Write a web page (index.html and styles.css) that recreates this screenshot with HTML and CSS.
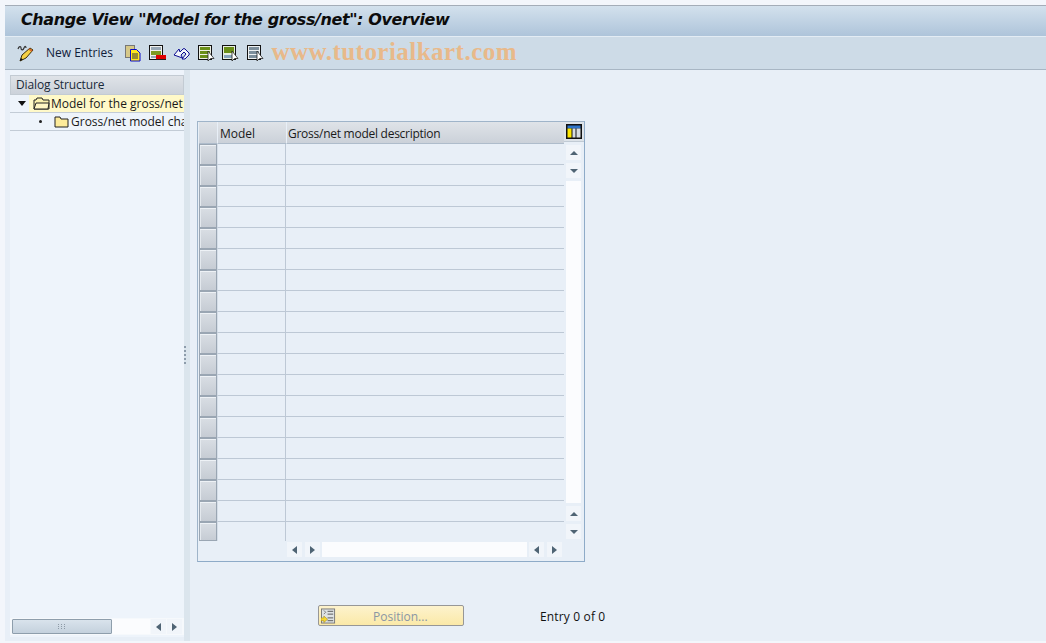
FILE: index.html
```html
<!DOCTYPE html>
<html lang="en">
<head>
<meta charset="utf-8">
<title>Change View</title>
<link rel="stylesheet" href="styles.css">
</head>
<body>
<div class="app">
  <header class="titlebar"><h1>Change View "Model for the gross/net": Overview</h1></header>
  <div class="toolbar">
    <svg class="ic pencil" viewBox="0 0 17 17"><path d="M1 4c1-3 3-3 3-1s2 3 3 0 2-1 2 0" fill="none" stroke="#333" stroke-width="1.200"/><path d="M3 16l2-6 8-7 3 2-7 8z" fill="#f6d145" stroke="#3a2c08"/><path d="M12 4l3 2" stroke="#d9682a" stroke-width="2"/><path d="M3 16l1-3 2 1.500z" fill="#111"/></svg>
    <span class="newent">New Entries</span>
    <svg class="ic copy" viewBox="0 0 17 17"><rect x=".5" y=".5" width="9" height="12" fill="#d6c888" stroke="#777"/><path d="M5.500 4.500h6l3.500 3.500v8H5.500z" fill="#ffe81a" stroke="#0a0ac8"/><path d="M7 9h6M7 11h6M7 13h6" stroke="#334"/></svg>
    <svg class="ic del" viewBox="0 0 17 17"><rect x=".5" y=".5" width="13" height="14" fill="#f2f2ee" stroke="#111"/><rect x="2" y="2" width="10" height="3" fill="#98a8b6"/><rect x="2" y="6" width="10" height="4" fill="#7f9a20"/><rect x="2" y="11" width="5" height="2" fill="#98a8b6"/><rect x="7" y="10" width="10" height="4" fill="#e00000"/><rect x="7" y="14" width="10" height="1" fill="#222"/></svg>
    <svg class="ic undo" viewBox="0 0 17 17"><path d="M1 10L6 4l1 3 3-3q1-1 2 0l4 4q.5 1 0 2l-4 4H9l4-5-2-2-3 3 1.500 3z" fill="#f3f6fb" stroke="#0a0a90" stroke-linejoin="round"/></svg>
    <svg class="ic sel" viewBox="0 0 17 17"><rect x=".5" y=".5" width="13" height="14" fill="#eef0e4" stroke="#111"/><rect x="2" y="2" width="10" height="3" fill="#6a8f18"/><rect x="2" y="6" width="10" height="3" fill="#6a8f18"/><rect x="2" y="10" width="10" height="3" fill="#6a8f18"/><path d="M10 6v10l2.500-2.500H16z" fill="#fff" stroke="#222" stroke-width=".8"/></svg>
    <svg class="ic sel2" viewBox="0 0 17 17"><rect x=".5" y=".5" width="13" height="14" fill="#e8efe0" stroke="#111"/><rect x="2" y="2" width="10" height="6" fill="#6a8f18"/><rect x="2" y="10" width="10" height="3" fill="#86a4bc"/><path d="M10 6v10l2.500-2.500H16z" fill="#fff" stroke="#222" stroke-width=".8"/></svg>
    <svg class="ic sel3" viewBox="0 0 17 17"><rect x=".5" y=".5" width="13" height="14" fill="#eef1f2" stroke="#111"/><rect x="2" y="2" width="10" height="3" fill="#7d8f9c"/><rect x="2" y="6" width="10" height="3" fill="#7d8f9c"/><rect x="2" y="10" width="10" height="3" fill="#7d8f9c"/><path d="M10 6v10l2.500-2.500H16z" fill="#fff" stroke="#222" stroke-width=".8"/></svg>
    <span class="watermark">www.tutorialkart.com</span>
  </div>
  <div class="main">
    <aside class="sidebar">
      <div class="sidehead">Dialog Structure</div>
      <div class="tree-row first">
        <span class="arrow-down"></span>
        <span class="selected">
          <svg class="folder" viewBox="0 0 17 13"><path d="M1 12V3h2l1-2h5l1 2h6v9z" fill="#fbf2b0" stroke="#222"/><path d="M1 12l2-6h13l-1 6z" fill="#fff6c4" stroke="#222"/></svg>
          <span class="label">Model for the gross/net</span>
        </span>
      </div>
      <div class="tree-row second">
        <span class="dot"></span>
        <svg class="folder closed" viewBox="0 0 15 13"><path d="M1 12V2h5l1 2h7v8z" fill="#fdeb9a" stroke="#222"/></svg>
        <span class="label">Gross/net model cha</span>
      </div>
      <div class="tree-fill"></div>
      <div class="side-scroll">
        <div class="thumb"><span class="grip"></span></div>
        <div class="track"></div>
        <span class="sbtn"><span class="tri-l"></span></span>
        <span class="sbtn"><span class="tri-r"></span></span>
      </div>
    </aside>
    <div class="sash"><span class="sash-dots"></span></div>
    <section class="content">
      <div class="table">
        <div class="grid">
          <div class="hd corner"></div>
          <div class="hd">Model</div>
          <div class="hd desc">Gross/net model description</div>
          <div class="hd cfg"><svg class="cfg-ic" viewBox="0 0 16 15"><rect width="16" height="15" fill="#111"/><rect x="1.500" y="1.500" width="13" height="3" fill="#2f74c8"/><rect x="1.500" y="4.500" width="4" height="9" fill="#ffe800"/><rect x="6.500" y="4.500" width="3" height="9" fill="#d8dde2"/><rect x="10.500" y="4.500" width="4" height="9" fill="#d8dde2"/></svg></div>
          <div class="rows" id="rows"></div>
          <div class="vscroll">
            <span class="vbtn"><span class="tri-u"></span></span>
            <span class="vbtn"><span class="tri-d"></span></span>
            <span class="vtrack"></span>
            <span class="vbtn"><span class="tri-u"></span></span>
            <span class="vbtn"><span class="tri-d"></span></span>
          </div>
        </div>
        <div class="hscroll">
          <span class="sbtn"><span class="tri-l"></span></span>
          <span class="sbtn"><span class="tri-r"></span></span>
          <span class="htrack"></span>
          <span class="sbtn"><span class="tri-l"></span></span>
          <span class="sbtn"><span class="tri-r"></span></span>
        </div>
      </div>
      <div class="footer">
        <button class="posbtn" type="button">
          <svg class="pos-ic" viewBox="0 0 16 16"><rect x=".5" y=".5" width="14" height="15" fill="#dfe3e4" stroke="#777"/><path d="M7 3h6M7 6h6M7 10h6M7 13h6" stroke="#555"/><path d="M3 2l2 2-2 2" fill="none" stroke="#777"/><path d="M0 10h3V8l4 3.500-4 3.500v-2H0z" fill="#f6d832" stroke="#a88a10" stroke-width=".6"/></svg>
          <span>Position...</span>
        </button>
        <span class="entry">Entry 0 of 0</span>
      </div>
    </section>
  </div>
</div>
<script src="app.js"></script>
</body>
</html>
```
FILE: app.js
```js
var rows = document.getElementById('rows');
for (var i = 0; i < 19; i++) {
  var r = document.createElement('div');
  r.className = 'row';
  r.innerHTML = '<span class="sel-cell"></span><span class="c1"></span><span class="c2"></span>';
  rows.appendChild(r);
}
```
FILE: styles.css
```css
* { box-sizing: border-box; }
html, body { margin: 0; height: 100%; }
body {
  width: 1046px; height: 643px; overflow: hidden;
  background: #f3f6fb;
  font-family: "Open Sans", "Noto Sans", sans-serif;
  font-size: 12px; color: #111;
}
.app { height: 643px; padding-top: 5px; display: flex; flex-direction: column; }
.titlebar {
  height: 32px; margin-left: 5px;
  border-top: 1px solid #a4adb8; border-bottom: 1px solid #e3ecf4;
  background: linear-gradient(#d3e1ed, #aec4da);
  display: flex; align-items: center; padding: 0 0 4px 16px;
}
.titlebar h1 {
  margin: 0; font: italic bold 16px "DejaVu Sans", sans-serif;
  letter-spacing: -.4px; color: #0c0c0c; white-space: nowrap;
}
.toolbar {
  height: 33px; margin-left: 5px;
  background: #cddbe7; border-bottom: 1px solid #a8b6c4;
  display: flex; align-items: center; padding-left: 12px;
}
.ic { width: 17px; height: 17px; flex: none; }
.newent { margin: -2px 0 0 12px; width: 79px; color: #10203a; font-size: 12px; white-space: nowrap; }
.del, .undo { margin-left: 7px; }
.sel, .sel2, .sel3 { margin-left: 7.500px; }
.watermark {
  margin: -2px 0 0 8px;
  font: bold 25px "Liberation Serif", serif;
  color: #e8b98a; white-space: nowrap; letter-spacing: .47px;
}
.main { flex: 1; display: flex; margin-left: 5px; margin-bottom: 2px; background: #e8eff7; min-height: 0; }
.sidebar {
  width: 174px; margin: 0 0 4px 5px; padding-top: 5px;
  background: #eef4fb; display: flex; flex-direction: column;
}
.sidehead {
  height: 20px; line-height: 17px; padding-left: 5px; letter-spacing: -.13px;
  background: linear-gradient(#dfe3e8, #ccd2da);
  border: 1px solid #c3cbd3;
  color: #1a2a3a; white-space: nowrap;
}
.tree-row { height: 18px; display: flex; align-items: center; border-bottom: 1px solid #c3ccd6; white-space: nowrap; overflow: hidden; }
.first { padding-left: 8px; }
.arrow-down { width: 0; height: 0; border: 4px solid transparent; border-top: 5px solid #111; border-bottom: 0; margin-right: 3px; flex: none; }
.selected { flex: 1; height: 17px; background: #fff9c8; display: flex; align-items: center; padding-left: 4px; overflow: hidden; }
.folder { width: 17px; height: 13px; flex: none; }
.label { margin-left: 1px; color: #1a1a1a; }
.second { padding-left: 29px; }
.dot { width: 3px; height: 3px; background: #222; border-radius: 50%; margin-right: 12px; flex: none; }
.closed { width: 15px; margin-right: 1px; }
.tree-fill { flex: 1; }
.side-scroll { height: 17px; display: flex; align-items: center; background: #f6f9fc; margin-bottom: 2px; }
.thumb {
  width: 100px; height: 15px; margin-left: 2px; display: flex; align-items: center; justify-content: center;
  background: linear-gradient(#d9e3ec, #c4d1dd); border: 1px solid #8e9eac; border-radius: 1px;
}
.grip { width: 9px; height: 6px; background: radial-gradient(circle at .5px .5px, #8d9aa6 .7px, transparent .8px) 0 0 / 3px 2px; }
.track { width: 38px; height: 15px; background: #fbfcfe; }
.sbtn { width: 15px; height: 15px; background: #f1f5fa; display: flex; align-items: center; justify-content: center; flex: none; }
.side-scroll .sbtn { margin-left: 1px; }
.tri-l { border: 4px solid transparent; border-right: 5px solid #4f6474; border-left: 0; }
.tri-r { border: 4px solid transparent; border-left: 5px solid #4f6474; border-right: 0; }
.tri-u { border: 4px solid transparent; border-bottom: 4px solid #4f6474; border-top: 0; }
.tri-d { border: 4px solid transparent; border-top: 4px solid #4f6474; border-bottom: 0; }
.sash { width: 6px; background: #dbe5ed; display: flex; align-items: center; justify-content: center; }
.sash-dots { width: 2px; height: 19px; background: repeating-linear-gradient(#8d9cab 0 2px, transparent 2px 4px); margin-left: -4px; }
.content { flex: 1; padding: 51px 0 0 7px; background: #e8eff7; display: flex; flex-direction: column; }
.table { width: 388px; height: 441px; border: 1px solid #9fb4c9; border-color: #9fb4c9 #8eabc8 #8eabc8 #9fb4c9; padding: 0 1px; display: flex; flex-direction: column; }
.grid { display: grid; grid-template-columns: 18px 69px 278px 20px; grid-template-rows: 22px auto; }
.hd {
  height: 22px; line-height: 23px; padding-left: 2px;
  background: linear-gradient(#dfe3e8, #cbd1d9);
  border-left: 1px solid #e8eff7; border-bottom: 1px solid #aebccb;
  color: #1a1a1a; white-space: nowrap;
}
.desc { padding-left: 1px; letter-spacing: -.26px; }
.corner { border-left: 0; }
.cfg { height: 20px; padding: 2px 0 0 2px; background: #dde3e9; border-left: 0; border-bottom: 1px solid #c0cad4; }
.cfg-ic { width: 16px; height: 15px; display: block; }
.rows { grid-column: 1 / 4; }
.row { display: grid; grid-template-columns: 18px 69px 278px; height: 21px; }
.row:last-child { height: 19px; }
.sel-cell { background: linear-gradient(#d9dee4, #c6ccd4); border: 1px solid #9aa6b3; box-shadow: inset 0 1px 0 #eef2f6, inset 1px 0 0 #e4e9ee; }
.c1 { border-bottom: 1px solid #bdc8d5; border-right: 1px solid #bdc8d5; border-left: 1px solid #d5dee8; }
.c2 { border-bottom: 1px solid #bdc8d5; }
.row:last-child .c1, .row:last-child .c2 { border-bottom: 0; }
.vscroll { grid-column: 4; padding: 1px 0 2px 2px; display: flex; flex-direction: column; align-items: flex-start; }
.vbtn { width: 15px; height: 15px; background: #f1f5fa; display: flex; align-items: center; justify-content: center; margin-bottom: 3px; flex: none; }
.vbtn:last-child { margin-bottom: 0; }
.vtrack { flex: 1; width: 15px; background: #fbfcfe; margin-bottom: 3px; }
.hscroll { height: 19px; display: flex; align-items: flex-start; padding: 1px 0 0 88px; }
.hscroll .sbtn { margin-right: 3px; }
.hscroll .sbtn:nth-child(2) { margin-right: 2px; }
.htrack { width: 205px; height: 15px; background: #fbfcfe; margin-right: 2px; }
.footer { flex: 1; display: flex; align-items: flex-start; padding: 43px 0 0 121px; }
.posbtn {
  width: 146px; height: 21px; padding: 0 0 0 2px; display: flex; align-items: center;
  background: linear-gradient(#fdf3cd, #fbe9a8);
  border: 1px solid #979797; border-radius: 2px;
  font: 12px "Open Sans", "Noto Sans", sans-serif; color: #8a96a4;
}
.pos-ic { width: 15px; height: 16px; flex: none; }
.posbtn span { margin: 1px 0 0 37px; }
.entry { margin: 3px 0 0 76px; color: #111; line-height: 18px; letter-spacing: .15px; }
```
